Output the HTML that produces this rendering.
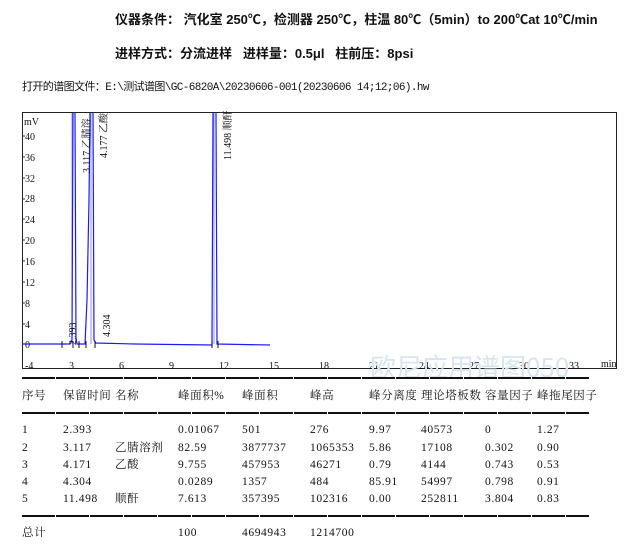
<!DOCTYPE html>
<html><head><meta charset="utf-8"><style>
body{margin:0;width:635px;height:548px;background:#fff;position:relative;overflow:hidden;font-family:"Liberation Serif","Noto Serif CJK SC",serif;color:#111}
.t{position:absolute;white-space:nowrap;font-size:11.5px;line-height:14px;letter-spacing:0.6px}
.h{position:absolute;white-space:nowrap;font-family:"Liberation Sans","Noto Sans CJK SC",sans-serif;font-weight:bold;font-size:13px}
.hr{position:absolute;left:22px;width:567px;height:2px;background:repeating-linear-gradient(90deg,#111 0 33px,#fff 33px 34px)}
</style></head><body>
<div class="h" style="left:115px;top:9px">仪器条件： 汽化室 250℃，检测器 250℃，柱温 80℃（5min）to 200℃at 10℃/min</div>
<div class="h" style="left:115px;top:43px">进样方式：分流进样&nbsp;&nbsp; 进样量：0.5μl&nbsp;&nbsp; 柱前压：8psi</div>
<div class="t" style="left:22px;top:81px;font-size:11px;font-family:'Liberation Mono','Noto Sans CJK SC',monospace;letter-spacing:-0.6px">打开的谱图文件：E:\测试谱图\GC-6820A\20230606-001(20230606 14;12;06).hw</div>
<svg style="position:absolute;left:0;top:0" width="635" height="548">
<rect x="22.5" y="112.5" width="594" height="256" fill="none" stroke="#222" stroke-width="1"/>
<g font-family="Liberation Serif" font-size="10" fill="#111">
<text x="24" y="125">mV</text>
<text x="25" y="140">40</text><text x="25" y="161">36</text><text x="25" y="182">32</text><text x="25" y="202">28</text><text x="25" y="223">24</text><text x="25" y="244">20</text><text x="25" y="265">16</text><text x="25" y="286">12</text><text x="25" y="307">8</text><text x="25" y="328">4</text><text x="25" y="348">0</text><text x="25" y="369">-4</text>
<text x="69" y="369">3</text><text x="119" y="369">6</text><text x="169" y="369">9</text><text x="219" y="369">12</text><text x="269" y="369">15</text><text x="319" y="369">18</text><text x="369" y="369">21</text><text x="419" y="369">24</text><text x="469" y="369">27</text><text x="519" y="369">30</text><text x="569" y="369">33</text><text x="601" y="367">min</text>
</g>
<g stroke="#333" stroke-width="1">
<line x1="22" y1="136" x2="25" y2="136"/><line x1="22" y1="157" x2="25" y2="157"/><line x1="22" y1="178" x2="25" y2="178"/><line x1="22" y1="199" x2="25" y2="199"/><line x1="22" y1="219" x2="25" y2="219"/><line x1="22" y1="240" x2="25" y2="240"/><line x1="22" y1="261" x2="25" y2="261"/><line x1="22" y1="282" x2="25" y2="282"/><line x1="22" y1="303" x2="25" y2="303"/><line x1="22" y1="324" x2="25" y2="324"/>
</g>
<g fill="none" stroke="#1a1aff" stroke-width="1.2">
<path d="M22 344 L70 344 L72 340 L73 113 M75 113 L76 338 L77 344 L85 344 L87 300 L89 200 L90 113 M93 113 L94 340 L96 343 L135 344 L212 345 L213 113 M216 113 L217 344 L270 345"/>
</g>
<g stroke="#1a1aff" stroke-width="0.8" opacity="0.6"><line x1="72" y1="113" x2="72" y2="344"/><line x1="91" y1="113" x2="91" y2="344"/><line x1="214" y1="113" x2="214" y2="344"/></g>
<g stroke="#111" stroke-width="1"><line x1="62" y1="341" x2="62" y2="348"/><line x1="73" y1="341" x2="73" y2="348"/><line x1="79" y1="341" x2="79" y2="348"/><line x1="86" y1="341" x2="86" y2="348"/><line x1="95" y1="341" x2="95" y2="348"/><line x1="212" y1="341" x2="212" y2="348"/><line x1="218" y1="341" x2="218" y2="348"/></g>
<g font-family="Liberation Serif,'Noto Serif CJK SC'" font-size="10" fill="#111">
<text transform="translate(90,173) rotate(-90)">3.117 乙腈溶</text>
<text transform="translate(107,158) rotate(-90)">4.177 乙酸</text>
<text transform="translate(231,160) rotate(-90)">11.498 顺酐</text>
<text transform="translate(76,345) rotate(-90)">2.393</text>
<text transform="translate(110,337) rotate(-90)">4.304</text>
</g>
<text x="370" y="377" font-family="Noto Sans CJK SC,sans-serif" font-size="26" fill="#d6e5ef">欧尼应用谱图050</text>
</svg>
<div class="hr" style="top:377px"></div>
<div class="hr" style="top:412px"></div>
<div class="hr" style="top:515px"></div>
<div class="t" style="left:22px;top:389px">序号</div><div class="t" style="left:63px;top:389px">保留时间</div><div class="t" style="left:115px;top:389px">名称</div><div class="t" style="left:178px;top:389px">峰面积%</div><div class="t" style="left:242px;top:389px">峰面积</div><div class="t" style="left:310px;top:389px">峰高</div><div class="t" style="left:369px;top:389px">峰分离度</div><div class="t" style="left:421px;top:389px">理论塔板数</div><div class="t" style="left:485px;top:389px">容量因子</div><div class="t" style="left:537px;top:389px">峰拖尾因子</div>
<div class="t" style="left:22px;top:423px">1</div><div class="t" style="left:63px;top:423px">2.393</div><div class="t" style="left:178px;top:423px">0.01067</div><div class="t" style="left:242px;top:423px">501</div><div class="t" style="left:310px;top:423px">276</div><div class="t" style="left:369px;top:423px">9.97</div><div class="t" style="left:421px;top:423px">40573</div><div class="t" style="left:485px;top:423px">0</div><div class="t" style="left:537px;top:423px">1.27</div>
<div class="t" style="left:22px;top:441px">2</div><div class="t" style="left:63px;top:441px">3.117</div><div class="t" style="left:115px;top:441px">乙腈溶剂</div><div class="t" style="left:178px;top:441px">82.59</div><div class="t" style="left:242px;top:441px">3877737</div><div class="t" style="left:310px;top:441px">1065353</div><div class="t" style="left:369px;top:441px">5.86</div><div class="t" style="left:421px;top:441px">17108</div><div class="t" style="left:485px;top:441px">0.302</div><div class="t" style="left:537px;top:441px">0.90</div>
<div class="t" style="left:22px;top:458px">3</div><div class="t" style="left:63px;top:458px">4.171</div><div class="t" style="left:115px;top:458px">乙酸</div><div class="t" style="left:178px;top:458px">9.755</div><div class="t" style="left:242px;top:458px">457953</div><div class="t" style="left:310px;top:458px">46271</div><div class="t" style="left:369px;top:458px">0.79</div><div class="t" style="left:421px;top:458px">4144</div><div class="t" style="left:485px;top:458px">0.743</div><div class="t" style="left:537px;top:458px">0.53</div>
<div class="t" style="left:22px;top:475px">4</div><div class="t" style="left:63px;top:475px">4.304</div><div class="t" style="left:178px;top:475px">0.0289</div><div class="t" style="left:242px;top:475px">1357</div><div class="t" style="left:310px;top:475px">484</div><div class="t" style="left:369px;top:475px">85.91</div><div class="t" style="left:421px;top:475px">54997</div><div class="t" style="left:485px;top:475px">0.798</div><div class="t" style="left:537px;top:475px">0.91</div>
<div class="t" style="left:22px;top:492px">5</div><div class="t" style="left:63px;top:492px">11.498</div><div class="t" style="left:115px;top:492px">顺酐</div><div class="t" style="left:178px;top:492px">7.613</div><div class="t" style="left:242px;top:492px">357395</div><div class="t" style="left:310px;top:492px">102316</div><div class="t" style="left:369px;top:492px">0.00</div><div class="t" style="left:421px;top:492px">252811</div><div class="t" style="left:485px;top:492px">3.804</div><div class="t" style="left:537px;top:492px">0.83</div>
<div class="t" style="left:22px;top:526px">总计</div><div class="t" style="left:178px;top:526px">100</div><div class="t" style="left:242px;top:526px">4694943</div><div class="t" style="left:310px;top:526px">1214700</div>
</body></html>
